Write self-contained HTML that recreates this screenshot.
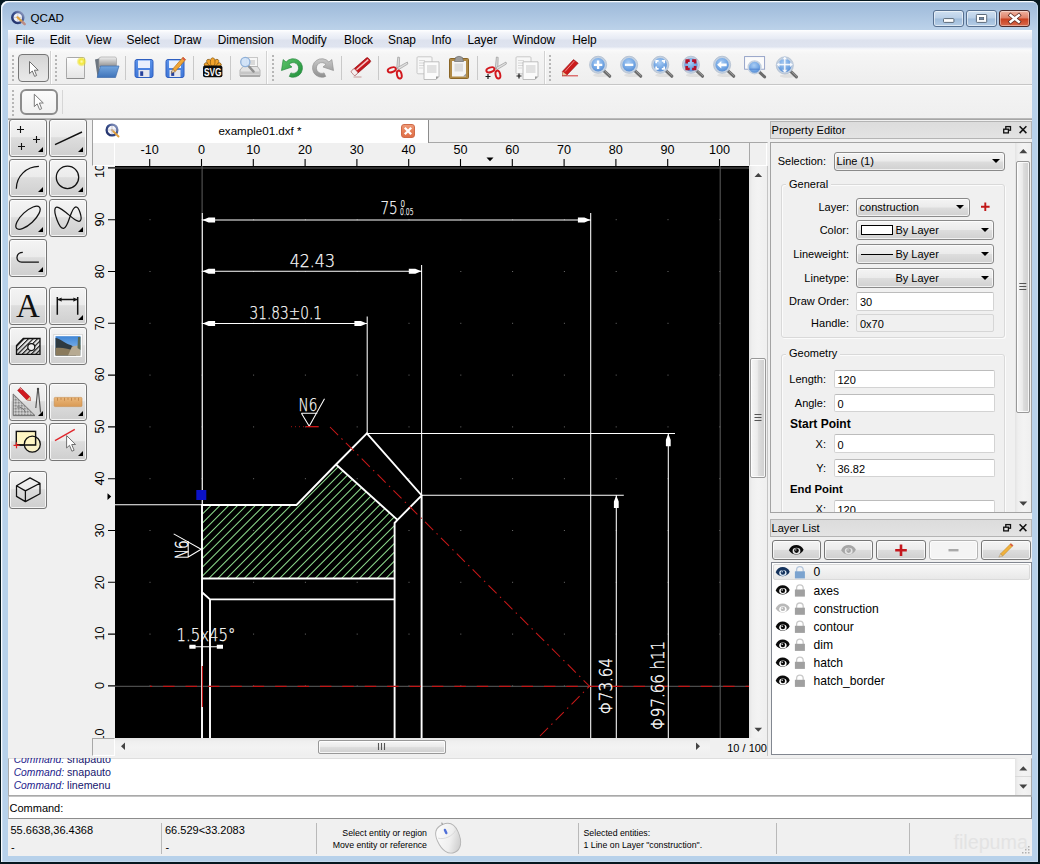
<!DOCTYPE html>
<html lang="en">
<head>
<meta charset="utf-8">
<title>QCAD</title>
<style>
html,body{margin:0;padding:0;}
body{width:1040px;height:864px;position:relative;overflow:hidden;background:#061820;font-family:"Liberation Sans",sans-serif;font-size:12px;color:#000;}
.a{position:absolute;}
.t{position:absolute;white-space:nowrap;line-height:14px;}
/* window frame */
#frame{left:0.7px;top:0.7px;width:1037.8px;height:861.8px;background:#b7d1ea;border-radius:7px 7px 0 0;}
#frameHi{left:0.7px;top:0.7px;width:1037.8px;height:861.8px;border-radius:7px 7px 0 0;box-shadow:inset 1.3px 1.3px 0 #f8fbfe, inset -1px -1px 0 #c6dbef;background:linear-gradient(180deg,#9db9d9 0px,#a9c3e0 12px,#bdd3ea 30px,#b7d1ea 120px,#b7d1ea 100%);}
#client{left:8px;top:30px;width:1024px;height:826px;background:#f0f0f0;}
/* menu */
#menubar{left:8px;top:30px;width:1024px;height:20px;background:linear-gradient(180deg,#ffffff 0,#f3f5fa 3px,#e6eaf4 9px,#dde2ee 10px,#dfe4f0 17px,#eef1f7 18px,#f5f6fa 19px,#f8f9fb 20px);}
.m{position:absolute;top:33px;line-height:14px;font-size:11.9px;white-space:nowrap;width:80px;text-align:center;}
/* toolbars */
.tbsep{position:absolute;width:1px;background:#c9c9c9;}
.grip{position:absolute;width:2px;background:repeating-linear-gradient(180deg,#b6b6b6 0,#b6b6b6 2px,transparent 2px,transparent 4px);}
/* Win7 style button */
.btn{position:absolute;box-sizing:border-box;border:1px solid #767676;border-radius:3px;background:linear-gradient(180deg,#f4f4f4 0,#ebebeb 47%,#dddddd 49%,#cfcfcf 100%);box-shadow:inset 0 0 0 1px rgba(255,255,255,.75);}
.corner{position:absolute;width:0;height:0;border-left:5px solid transparent;border-bottom:5px solid #000;}
.ed{position:absolute;box-sizing:border-box;background:#fff;border:1px solid #d3d3d3;border-top-color:#bcbcbc;border-radius:2px;}
.cb{position:absolute;box-sizing:border-box;border:1px solid #8a8a8a;border-radius:3px;background:linear-gradient(180deg,#f4f4f4 0,#ebebeb 48%,#dddddd 52%,#d0d0d0 100%);box-shadow:inset 0 0 0 1px rgba(255,255,255,.7);}
.dn{position:absolute;width:0;height:0;border-left:4px solid transparent;border-right:4px solid transparent;border-top:4px solid #000;}
.pl{position:absolute;white-space:nowrap;line-height:14px;font-size:11px;text-align:right;}
.pv{position:absolute;white-space:nowrap;line-height:14px;font-size:11px;}
.ll{position:absolute;white-space:nowrap;line-height:14px;font-size:12.1px;left:813.5px;}
.st{position:absolute;white-space:nowrap;line-height:13px;font-size:11px;}
</style>
</head>
<body>
<div class="a" id="frame"></div>
<div class="a" id="frameHi"></div>
<div class="a" id="client"></div>

<!-- TITLE BAR -->
<div class="t" style="left:30.500px;top:9.500px;font-size:11.600px;line-height:16px;">QCAD</div>

<!-- MENU BAR -->
<div class="a" id="menubar"></div>
<span class="m" style="left:-15.00px">File</span>
<span class="m" style="left:20.00px">Edit</span>
<span class="m" style="left:58.50px">View</span>
<span class="m" style="left:103.00px">Select</span>
<span class="m" style="left:147.50px">Draw</span>
<span class="m" style="left:205.75px">Dimension</span>
<span class="m" style="left:269.25px">Modify</span>
<span class="m" style="left:318.50px">Block</span>
<span class="m" style="left:362.00px">Snap</span>
<span class="m" style="left:401.50px">Info</span>
<span class="m" style="left:442.25px">Layer</span>
<span class="m" style="left:494.00px">Window</span>
<span class="m" style="left:544.50px">Help</span>

<!-- caption buttons -->
<div class="a" style="left:933px;top:10.400px;width:30.700px;height:16.200px;box-sizing:border-box;border:1px solid #566f8f;border-radius:3px;background:linear-gradient(180deg,#cfe0f1 0,#b9cfe7 48%,#9fbcdb 52%,#b5cde6 100%);box-shadow:inset 0 0 0 1px rgba(255,255,255,.55)"></div>
<div class="a" style="left:966px;top:10.400px;width:30.500px;height:16.200px;box-sizing:border-box;border:1px solid #566f8f;border-radius:3px;background:linear-gradient(180deg,#cfe0f1 0,#b9cfe7 48%,#9fbcdb 52%,#b5cde6 100%);box-shadow:inset 0 0 0 1px rgba(255,255,255,.55)"></div>
<div class="a" style="left:999px;top:10.400px;width:31px;height:16.200px;box-sizing:border-box;border:1px solid #4a2a2a;border-radius:3px;background:linear-gradient(180deg,#eeb3a1 0,#df7f66 48%,#c8401f 52%,#d8694c 100%);box-shadow:inset 0 0 0 1px rgba(255,255,255,.4)"></div>
<svg class="a" style="left:0;top:0" width="1040" height="40" viewBox="0 0 1040 40">
<rect x="943.500" y="18.600" width="10.400" height="3.800" rx=".8" fill="#fff" stroke="#4d5b6b" stroke-width=".9"/>
<rect x="976.400" y="14.500" width="10.300" height="7.900" rx=".8" fill="#fff" stroke="#4d5b6b" stroke-width=".9"/>
<rect x="979.400" y="17.400" width="4.300" height="2.300" fill="#6f87a4" stroke="#4d5b6b" stroke-width=".7"/>
<path d="M1010.600 15.300 l8.200 6.500 M1018.800 15.300 l-8.200 6.500" stroke="#5a2a22" stroke-width="4" stroke-linecap="square"/>
<path d="M1010.600 15.300 l8.200 6.500 M1018.800 15.300 l-8.200 6.500" stroke="#fff" stroke-width="2.500" stroke-linecap="square"/>
<!-- app icon -->
<defs><linearGradient id="gRing" x1="1" y1="0" x2="0" y2="1"><stop offset="0" stop-color="#9aa6c8"/><stop offset=".45" stop-color="#3b4f8c"/><stop offset="1" stop-color="#1e2e66"/></linearGradient></defs>
<circle cx="17.800" cy="17.400" r="5.500" fill="#eef1f8" stroke="url(#gRing)" stroke-width="2.500"/>
<path d="M14 17.400 h7.600 M17.800 13.600 v7.600" stroke="#b9bdd0" stroke-width=".7"/>
<path d="M17.500 17.300 L24.300 23.800" stroke="#e3a23a" stroke-width="2.200" stroke-linecap="round"/>
<path d="M22.200 21.800 L24.800 24.300" stroke="#b98a8a" stroke-width="2.200" stroke-linecap="round"/>
</svg>
<!-- TOOLBARS -->
<div class="a" style="left:8px;top:50px;width:1024px;height:34px;background:linear-gradient(180deg,#fafafa 0,#f5f5f5 4px,#eeeeee 100%)"></div>
<div class="a" style="left:8px;top:86px;width:1024px;height:32px;background:linear-gradient(180deg,#f4f4f4 0,#efefef 100%)"></div>
<div class="a" style="left:8px;top:84px;width:1024px;height:1px;background:#c6c6c6"></div>
<div class="a" style="left:8px;top:85px;width:1024px;height:1px;background:#fbfbfb"></div>
<div class="a" style="left:8px;top:118px;width:1024px;height:1px;background:#b9b9b9"></div>
<div class="a" style="left:8px;top:119px;width:1024px;height:1px;background:#a6a6a6"></div>
<!-- grips -->
<div class="grip" style="left:12px;top:55px;height:26px"></div>
<div class="grip" style="left:55px;top:55px;height:26px"></div>
<div class="grip" style="left:272px;top:55px;height:26px"></div>
<div class="grip" style="left:549px;top:55px;height:26px"></div>
<div class="grip" style="left:12px;top:90px;height:26px"></div>
<!-- toolbar end separators -->
<div class="tbsep" style="left:50px;top:51px;height:33px;background:#d2d2d2"></div>
<div class="tbsep" style="left:51px;top:51px;height:33px;background:#fdfdfd"></div>
<div class="tbsep" style="left:266px;top:51px;height:33px;background:#d2d2d2"></div>
<div class="tbsep" style="left:267px;top:51px;height:33px;background:#fdfdfd"></div>
<div class="tbsep" style="left:544px;top:51px;height:33px;background:#d2d2d2"></div>
<div class="tbsep" style="left:545px;top:51px;height:33px;background:#fdfdfd"></div>
<!-- item separators -->
<div class="tbsep" style="left:125px;top:56px;height:24px"></div>
<div class="tbsep" style="left:193px;top:56px;height:24px"></div>
<div class="tbsep" style="left:230px;top:56px;height:24px"></div>
<div class="tbsep" style="left:341px;top:56px;height:24px"></div>
<div class="tbsep" style="left:378px;top:56px;height:24px"></div>
<div class="tbsep" style="left:477px;top:56px;height:24px"></div>
<div class="tbsep" style="left:62px;top:90px;height:24px;background:#d6d6d6"></div>
<!-- pressed button tb1 -->
<div class="a" style="left:18px;top:54px;width:31px;height:28px;box-sizing:border-box;border:1.5px solid #767676;border-radius:4px;background:linear-gradient(180deg,#d4d4d4 0,#dedede 40%,#e9e9e9 100%);"></div>
<!-- button tb2 -->
<div class="a" style="left:20px;top:89px;width:38px;height:26px;box-sizing:border-box;border:2px solid #8d8d8d;border-radius:6px;background:linear-gradient(180deg,#fbfbfb 0,#f1f1f1 100%);"></div>
<svg class="a" style="left:0;top:0" width="1040" height="864" viewBox="0 0 1040 864">
<defs>
<linearGradient id="gPaper" x1="0" y1="0" x2="0" y2="1"><stop offset="0" stop-color="#ffffff"/><stop offset="1" stop-color="#e4e4e4"/></linearGradient>
<radialGradient id="gGlow"><stop offset="0" stop-color="#fffbb0"/><stop offset=".45" stop-color="#f3e83a"/><stop offset="1" stop-color="#e6d800" stop-opacity="0"/></radialGradient>
<linearGradient id="gFold" x1="0" y1="0" x2="0" y2="1"><stop offset="0" stop-color="#74a7df"/><stop offset="1" stop-color="#3f73b9"/></linearGradient>
<linearGradient id="gGray" x1="0" y1="0" x2="0" y2="1"><stop offset="0" stop-color="#f0f0f0"/><stop offset="1" stop-color="#8c8c8c"/></linearGradient>
<linearGradient id="gFlop" x1="0" y1="0" x2="0" y2="1"><stop offset="0" stop-color="#5b93ea"/><stop offset="1" stop-color="#3f77d8"/></linearGradient>
<radialGradient id="gLens" cx=".45" cy=".35" r=".7"><stop offset="0" stop-color="#a9cdf5"/><stop offset=".6" stop-color="#6fa3e2"/><stop offset="1" stop-color="#4c82cc"/></radialGradient>
<linearGradient id="gGreen" x1="0" y1="0" x2="1" y2="1"><stop offset="0" stop-color="#5cc46a"/><stop offset="1" stop-color="#1f8f3a"/></linearGradient>
<linearGradient id="gRedo" x1="0" y1="0" x2="0" y2="1"><stop offset="0" stop-color="#c9c9c9"/><stop offset="1" stop-color="#8f8f8f"/></linearGradient>
</defs>
<!-- cursor arrows -->
<path d="M29.5 61.5 L29.5 73.6 L32.3 71 L34.6 76.4 L36.6 75.5 L34.4 70.2 L38.2 70.2 Z" fill="#fff" stroke="#6e6e6e" stroke-width="1" stroke-linejoin="round"/>
<path d="M34.3 94.2 L34.3 106.6 L37.2 103.9 L39.6 109.6 L41.7 108.7 L39.4 103 L43.3 103 Z" fill="#fff" stroke="#7a7a7a" stroke-width="1" stroke-linejoin="round"/>
<!-- new -->
<rect x="66.5" y="57.5" width="18" height="21" rx="1" fill="url(#gPaper)" stroke="#a9a9a9"/>
<path d="M66.5 78.5 H84.5" stroke="#8c8c8c"/>
<circle cx="81.6" cy="61.6" r="5.2" fill="url(#gGlow)"/>
<!-- open -->
<path d="M95 59.5 L99 58.5 L99.5 77 L97.5 77 Z" fill="#6d7680"/>
<path d="M99 58 L101 57 H115.5 L116.5 58.5 V67 H99 Z" fill="url(#gGray)" stroke="#9a9a9a" stroke-width=".6"/>
<path d="M100.5 66 H119 L115.5 77.5 H97.2 Z" fill="url(#gFold)" stroke="#3d6cab" stroke-width=".7"/>
<!-- save -->
<rect x="135" y="59.5" width="18" height="18" rx="2" fill="url(#gFlop)" stroke="#2f5fc0"/>
<rect x="138" y="60.5" width="12" height="7.5" fill="#e9f0fd"/>
<rect x="138.5" y="70" width="11" height="7" fill="#e6e6ee"/>
<rect x="140.2" y="71.3" width="3" height="4.6" fill="#27419c"/>
<!-- save as -->
<rect x="166" y="59.5" width="18" height="18" rx="2" fill="url(#gFlop)" stroke="#2f5fc0"/>
<rect x="169" y="60.5" width="12" height="7.5" fill="#e9f0fd"/>
<rect x="169.5" y="70" width="11" height="7" fill="#e6e6ee"/>
<rect x="171.2" y="71.3" width="3" height="4.6" fill="#27419c"/>
<path d="M183 57.2 L185.6 59.6 L175.2 71.6 L172.6 69.2 Z" fill="#f0a636" stroke="#b86f14" stroke-width=".7"/>
<path d="M172.6 69.2 L175.2 71.6 L171.3 73.2 Z" fill="#f4d9b0" stroke="#7a5a30" stroke-width=".5"/>
<path d="M183 57.2 L185.6 59.6 L184.6 60.8 L182 58.4Z" fill="#d9534a"/>
<!-- svg export -->
<g fill="#f3a42c" stroke="#6a4208" stroke-width=".55">
<ellipse cx="212.700" cy="62" rx="2.300" ry="4.200" transform="rotate(-72 212.700 66.800)"/>
<ellipse cx="212.700" cy="62" rx="2.300" ry="4.200" transform="rotate(72 212.700 66.800)"/>
<ellipse cx="212.700" cy="62" rx="2.300" ry="4.200" transform="rotate(-36 212.700 66.800)"/>
<ellipse cx="212.700" cy="62" rx="2.300" ry="4.200" transform="rotate(36 212.700 66.800)"/>
<ellipse cx="212.700" cy="62" rx="2.300" ry="4.200"/>
</g>
<rect x="203" y="65.600" width="19.400" height="11.600" rx="2" fill="#0c0c0c"/>
<text x="212.700" y="75.600" font-family="Liberation Sans, sans-serif" font-weight="bold" font-size="10.400" fill="#fff" text-anchor="middle" textLength="17.600" lengthAdjust="spacingAndGlyphs">SVG</text>
<!-- print preview -->
<rect x="246.5" y="57.5" width="11" height="11" fill="#f6f6f6" stroke="#b4b4b4" stroke-width=".7"/>
<rect x="249" y="60" width="6" height="5" fill="#d9d9d9"/>
<path d="M240 70 L243 66.5 H257.5 L260 70 V76 H240 Z" fill="#e3e3e3" stroke="#9b9b9b" stroke-width=".7"/>
<rect x="240" y="71.5" width="20" height="3" fill="#c6c6c6"/>
<rect x="240" y="75" width="20" height="2" fill="#a9a9a9"/>
<path d="M248.5 66 L253.6 71.6" stroke="#8f8f8f" stroke-width="2.4" stroke-linecap="round"/>
<circle cx="245.3" cy="62" r="4.6" fill="#cfe2f7" fill-opacity=".92" stroke="#8fb0d8" stroke-width="1.3"/>
<!-- undo -->
<path d="M286.080 62.020 A9.300 9.300 0 1 1 289.270 76.430 L290.920 72.890 A5.400 5.400 0 1 0 289.060 64.530 L292.010 67 L281.460 70.550 L283.130 59.540 Z" fill="url(#gGreen)" stroke="#1d7f35" stroke-width=".6" stroke-linejoin="round"/>
<!-- redo -->
<path transform="translate(615 0) scale(-1 1)" d="M286.080 62.020 A9.300 9.300 0 1 1 289.270 76.430 L290.920 72.890 A5.400 5.400 0 1 0 289.060 64.530 L292.010 67 L281.460 70.550 L283.130 59.540 Z" fill="url(#gRedo)" stroke="#8a8a8a" stroke-width=".6" stroke-linejoin="round"/>
<!-- eraser -->
<path d="M353.500 77 H361.500" stroke="#c9a3a3" stroke-width="1.100"/>
<g transform="rotate(-41 361 66.500)">
<rect x="350" y="63.600" width="22" height="5.800" rx="1.500" fill="#c4161c" stroke="#8f0f12" stroke-width=".6"/>
<rect x="350" y="63.600" width="4.600" height="5.800" rx="1.200" fill="#f6eeee" stroke="#b49a9a" stroke-width=".5"/>
<rect x="355.500" y="65.300" width="15.500" height="1.500" fill="#f6c4c4"/>
</g>
<!-- scissors -->
<g id="sc1">
<path d="M397.8 57 L399.6 57.4 L399.2 69.5 L396.6 68.6 Z" fill="#d8d8d8" stroke="#8f8f8f" stroke-width=".6"/>
<path d="M407.4 62 L407.8 64 L398.6 69.6 L397.4 67.6 Z" fill="#e0e0e0" stroke="#8f8f8f" stroke-width=".6"/>
<ellipse cx="391.8" cy="69.8" rx="4.2" ry="2.3" transform="rotate(-18 391.8 69.8)" fill="none" stroke="#d2181e" stroke-width="1.9"/>
<ellipse cx="399.3" cy="74.6" rx="2.3" ry="4" transform="rotate(-14 399.3 74.6)" fill="none" stroke="#d2181e" stroke-width="1.9"/>
</g>
<!-- copy -->
<rect x="417" y="56.8" width="15" height="17" rx="1" fill="#f7f7f7" stroke="#bdbdbd" stroke-width=".8"/>
<path d="M419 60.5h6M419 63h6M419 65.500h6M419 68h4" stroke="#d0d0d0" stroke-width=".8"/>
<path d="M424 61.800 H439 V76.500 L436 79.500 H424 Z" fill="#fbfbfb" stroke="#b0b0b0" stroke-width=".8"/>
<rect x="427" y="65" width="9.500" height="8" fill="#e1e1e1"/>
<path d="M439 76.500 L436 79.500 V76.500 Z" fill="#9a9a9a"/>
<!-- paste -->
<rect x="449.500" y="58.500" width="19" height="20" rx="1" fill="#b08a46" stroke="#8a6526" stroke-width="1"/>
<rect x="452" y="61" width="14" height="15.500" fill="#f4f4f4"/>
<rect x="454.500" y="63.500" width="8.500" height="8" fill="#dcdcdc"/>
<path d="M466 73.500 L463 76.500 H466 Z" fill="#9a9a9a"/>
<path d="M454.500 61.500 L455.500 57.500 Q459 55 462.500 57.500 L463.500 61.500 Z" fill="#9c9c9c" stroke="#6f6f6f" stroke-width=".7"/>
<!-- cut+ -->
<path d="M496.400 57 L498.200 57.400 L497.800 69.500 L495.200 68.600 Z" fill="#d8d8d8" stroke="#8f8f8f" stroke-width=".6"/>
<path d="M506 62 L506.400 64 L497.200 69.600 L496 67.600 Z" fill="#e0e0e0" stroke="#8f8f8f" stroke-width=".6"/>
<ellipse cx="490.400" cy="69.800" rx="4.200" ry="2.300" transform="rotate(-18 490.400 69.800)" fill="none" stroke="#d2181e" stroke-width="1.900"/>
<ellipse cx="497.900" cy="74.600" rx="2.300" ry="4" transform="rotate(-14 497.900 74.600)" fill="none" stroke="#d2181e" stroke-width="1.900"/>
<path d="M485.500 76.500 h5 M488 74 v5" stroke="#1a1a1a" stroke-width="1.200"/>
<!-- copy+ -->
<rect x="516" y="56.800" width="15" height="17" rx="1" fill="#f7f7f7" stroke="#bdbdbd" stroke-width=".8"/>
<path d="M518 60.500h6M518 63h6M518 65.500h6M518 68h4" stroke="#d0d0d0" stroke-width=".8"/>
<path d="M523 61.800 H538 V76.500 L535 79.500 H523 Z" fill="#fbfbfb" stroke="#b0b0b0" stroke-width=".8"/>
<rect x="526" y="65" width="9.500" height="8" fill="#e1e1e1"/>
<path d="M538 76.500 L535 79.500 V76.500 Z" fill="#9a9a9a"/>
<path d="M516.500 76 h5 M519 73.500 v5" stroke="#1a1a1a" stroke-width="1.200"/>
<!-- red pencil -->
<path d="M562 75.800 H578" stroke="#d64545" stroke-width="1.100"/>
<path d="M573.500 59.600 L578.200 63.200 L567 75 L562.600 75.600 L562.400 71.400 Z" fill="#cc1c1c" stroke="#8f0f12" stroke-width=".6"/>
<path d="M562.400 71.400 L567 75 L562.600 75.600 Z" fill="#e8c9a0"/>
<path d="M574.500 60.800 L565 71.500" stroke="#f08a8a" stroke-width="1"/>
</svg>
<svg class="a" style="left:0;top:0" width="1040" height="864" viewBox="0 0 1040 864">
<!-- zoom in -->
<ellipse cx="601.1" cy="75.3" rx="8" ry="1.8" fill="#000" fill-opacity=".07"/>
<path d="M603.7 70.6 L609.7 76.2" stroke="#6c6c6c" stroke-width="3.2" stroke-linecap="round"/>
<path d="M605.3 71.4 L609.9 75.7" stroke="#9a9a9a" stroke-width="1" stroke-linecap="round"/>
<circle cx="598.1" cy="64.8" r="7.6" fill="url(#gLens)" stroke="#c3d0e0" stroke-width="1.8"/>
<circle cx="598.1" cy="64.8" r="8.6" fill="none" stroke="#9fb0c6" stroke-width=".6"/>
<path d="M593.9 64.8 h8.4 M598.1 60.6 v8.4" stroke="#fff" stroke-width="2.3"/>
<!-- zoom out -->
<ellipse cx="632.1" cy="75.3" rx="8" ry="1.8" fill="#000" fill-opacity=".07"/>
<path d="M634.7 70.6 L640.7 76.2" stroke="#6c6c6c" stroke-width="3.2" stroke-linecap="round"/>
<path d="M636.3 71.4 L640.9 75.7" stroke="#9a9a9a" stroke-width="1" stroke-linecap="round"/>
<circle cx="629.1" cy="64.8" r="7.6" fill="url(#gLens)" stroke="#c3d0e0" stroke-width="1.8"/>
<circle cx="629.1" cy="64.8" r="8.6" fill="none" stroke="#9fb0c6" stroke-width=".6"/>
<path d="M624.9 64.8 h8.4" stroke="#fff" stroke-width="2.3"/>
<!-- zoom auto -->
<ellipse cx="663.2" cy="75.3" rx="8" ry="1.8" fill="#000" fill-opacity=".07"/>
<path d="M665.8 70.6 L671.8 76.2" stroke="#6c6c6c" stroke-width="3.2" stroke-linecap="round"/>
<path d="M667.4 71.4 L672.0 75.7" stroke="#9a9a9a" stroke-width="1" stroke-linecap="round"/>
<circle cx="660.2" cy="64.8" r="7.6" fill="url(#gLens)" stroke="#c3d0e0" stroke-width="1.8"/>
<circle cx="660.2" cy="64.8" r="8.6" fill="none" stroke="#9fb0c6" stroke-width=".6"/>
<path d="M656.2 63.2 v-2.4 h2.4 M661.8 60.8 h2.4 v2.4 M664.2 66.4 v2.4 h-2.4 M658.6 68.8 h-2.4 v-2.4" fill="none" stroke="#fff" stroke-width="1.7"/>
<!-- zoom selection -->
<ellipse cx="693.9" cy="75.3" rx="8" ry="1.8" fill="#000" fill-opacity=".07"/>
<path d="M696.5 70.6 L702.5 76.2" stroke="#6c6c6c" stroke-width="3.2" stroke-linecap="round"/>
<path d="M698.1 71.4 L702.7 75.7" stroke="#9a9a9a" stroke-width="1" stroke-linecap="round"/>
<circle cx="690.9" cy="64.8" r="7.6" fill="url(#gLens)" stroke="#c3d0e0" stroke-width="1.8"/>
<circle cx="690.9" cy="64.8" r="8.6" fill="none" stroke="#9fb0c6" stroke-width=".6"/>
<path d="M686.7 63.6 v-3 h3 M692.1 60.6 h3 v3 M695.1 66.0 v3 h-3 M689.7 69.0 h-3 v-3" fill="none" stroke="#b3122a" stroke-width="2.6"/>
<!-- zoom previous -->
<ellipse cx="725.1" cy="75.3" rx="8" ry="1.8" fill="#000" fill-opacity=".07"/>
<path d="M727.7 70.6 L733.7 76.2" stroke="#6c6c6c" stroke-width="3.2" stroke-linecap="round"/>
<path d="M729.3 71.4 L733.9 75.7" stroke="#9a9a9a" stroke-width="1" stroke-linecap="round"/>
<circle cx="722.1" cy="64.8" r="7.6" fill="url(#gLens)" stroke="#c3d0e0" stroke-width="1.8"/>
<circle cx="722.1" cy="64.8" r="8.6" fill="none" stroke="#9fb0c6" stroke-width=".6"/>
<path d="M717.1 64.8 L721.3 61.0 V63.4 H726.7 V66.2 H721.3 V68.6 Z" fill="#fff"/>
<!-- zoom window -->
<rect x="744.6" y="56.6" width="20" height="12.6" fill="#fbfbfb" stroke="#8d9cc4" stroke-width=".9"/>
<path d="M759.2 71.9 L764.6 76.9" stroke="#6c6c6c" stroke-width="3" stroke-linecap="round"/>
<circle cx="754.6" cy="67.3" r="6.3" fill="url(#gLens)" stroke="#c3d0e0" stroke-width="1.6"/>
<path d="M749.2 69.2 h10.8" stroke="#4f82cf" stroke-width=".9"/>
<!-- pan zoom -->
<ellipse cx="787.8" cy="75.9" rx="8" ry="1.8" fill="#000" fill-opacity=".07"/>
<path d="M790.4 71.2 L796.4 76.8" stroke="#6c6c6c" stroke-width="3.2" stroke-linecap="round"/>
<path d="M792.0 72.0 L796.6 76.3" stroke="#9a9a9a" stroke-width="1" stroke-linecap="round"/>
<circle cx="784.8" cy="65.4" r="7.6" fill="url(#gLens)" stroke="#c3d0e0" stroke-width="1.8"/>
<circle cx="784.8" cy="65.4" r="8.6" fill="none" stroke="#9fb0c6" stroke-width=".6"/>
<path d="M784.8 56.2 l2.6 3.2 h-1.7 v4.3 h4.3 v-1.700 l3.200 2.600 l-3.200 2.600 v-1.700 h-4.300 v4.300 h1.700 l-2.600 3.200 l-2.600 -3.200 h1.700 v-4.300 h-4.300 v1.700 l-3.200 -2.600 l3.200 -2.600 v1.700 h4.300 v-4.300 h-1.700 Z" fill="#fff" fill-opacity=".95" stroke="#9fbbe0" stroke-width=".4"/>
</svg>

<!-- LEFT TOOLS -->
<div class="btn" style="left:9px;top:119.3px;width:38px;height:37.300px"></div>
<div class="corner" style="left:38px;top:147.3px"></div>
<div class="btn" style="left:49px;top:119.3px;width:38px;height:37.300px"></div>
<div class="corner" style="left:78px;top:147.3px"></div>
<div class="btn" style="left:9px;top:159.3px;width:38px;height:37.300px"></div>
<div class="corner" style="left:38px;top:187.3px"></div>
<div class="btn" style="left:49px;top:159.3px;width:38px;height:37.300px"></div>
<div class="corner" style="left:78px;top:187.3px"></div>
<div class="btn" style="left:9px;top:199.3px;width:38px;height:37.300px"></div>
<div class="corner" style="left:38px;top:227.3px"></div>
<div class="btn" style="left:49px;top:199.3px;width:38px;height:37.300px"></div>
<div class="corner" style="left:78px;top:227.3px"></div>
<div class="btn" style="left:9px;top:239.3px;width:38px;height:37.300px"></div>
<div class="corner" style="left:38px;top:267.3px"></div>
<div class="btn" style="left:9px;top:287.3px;width:38px;height:37.300px"></div>
<div class="btn" style="left:49px;top:287.3px;width:38px;height:37.300px"></div>
<div class="corner" style="left:78px;top:315.3px"></div>
<div class="btn" style="left:9px;top:327.3px;width:38px;height:37.300px"></div>
<div class="btn" style="left:49px;top:327.3px;width:38px;height:37.300px"></div>
<div class="btn" style="left:9px;top:383.3px;width:38px;height:37.300px"></div>
<div class="corner" style="left:38px;top:411.3px"></div>
<div class="btn" style="left:49px;top:383.3px;width:38px;height:37.300px"></div>
<div class="corner" style="left:78px;top:411.3px"></div>
<div class="btn" style="left:9px;top:423.3px;width:38px;height:37.300px"></div>
<div class="btn" style="left:49px;top:423.3px;width:38px;height:37.300px"></div>
<div class="corner" style="left:78px;top:451.3px"></div>
<div class="btn" style="left:9px;top:471.3px;width:38px;height:37.300px"></div>
<svg class="a" style="left:0;top:0" width="1040" height="864" viewBox="0 0 1040 864">
<defs>
<linearGradient id="gSky" x1="0" y1="0" x2="0" y2="1"><stop offset="0" stop-color="#3f86d6"/><stop offset="1" stop-color="#9cc6ee"/></linearGradient>
<linearGradient id="gWood" x1="0" y1="0" x2="0" y2="1"><stop offset="0" stop-color="#eab77a"/><stop offset="1" stop-color="#d99a55"/></linearGradient>
<pattern id="pHatchI" width="3.2" height="3.2" patternUnits="userSpaceOnUse" patternTransform="rotate(-45)"><rect x="0" y="0" width="3.2" height="1.1" fill="#111"/></pattern>
<pattern id="pTri" width="3" height="3" patternUnits="userSpaceOnUse"><rect width="3" height="3" fill="#b5b5b5"/><rect width="1.5" height="1.5" fill="#8c8c8c"/><rect x="1.5" y="1.5" width="1.500" height="1.500" fill="#d2d2d2"/></pattern>
</defs>
<g fill="none" stroke="#111" stroke-width="1.25">
<!-- points -->
<path d="M17 129.500h7M20.500 126v7 M33 139.500h7M36.500 136v7 M18 146.500h7M21.500 143v7" stroke-width="1.1"/>
<!-- line -->
<path d="M55 144.600 L82 132" stroke-width="1.4"/>
<!-- arc -->
<path d="M16.300 188.700 A22.600 22.600 0 0 1 38.900 166.300"/>
<!-- circle -->
<circle cx="67.500" cy="177.300" r="11.200"/>
<!-- ellipse -->
<ellipse cx="28" cy="217.700" rx="15.600" ry="6.200" transform="rotate(-43 28 217.700)"/>
<!-- spline -->
<path d="M55.200 208.300 C53.500 212 59 229 63.600 228.400 C69 227.600 70.500 207 75.900 206.800 C79 206.800 82.500 218 80.400 220.600 C78 223.500 71 216.500 66 212.500 C61 208.500 56.500 205.500 55.200 208.300 Z"/>
<!-- polyline -->
<path d="M22.800 252.300 C15.500 252.500 15 262.100 21.700 262.100 L38.900 262.100"/>
<!-- dimension -->
<path d="M57.300 297 V314.800 M77.700 297 V314.800 M57.300 299.600 H77.700" stroke-width="1.5"/>
<path d="M57.800 299.600 l3.800 -2.100 v4.200 Z M77.200 299.600 l-3.800 -2.100 v4.200 Z" fill="#111" stroke="none"/>
<!-- cube -->
<path d="M30 477.900 L40 483.300 V493.700 L25.400 501.600 L16.500 496.400 V485.700 Z M16.500 485.700 L25.400 490.900 L40 483.300 M25.400 490.900 V501.600" stroke-linejoin="round"/>
</g>
<!-- hatch icon -->
<path d="M16.500 354.400 V345.500 L23.300 338.500 H40 V354.400 Z" fill="url(#pHatchI)" stroke="#111" stroke-width="1.3"/>
<circle cx="31.300" cy="347.100" r="3.500" fill="#eee" stroke="#111" stroke-width="1.2"/>
<!-- image icon -->
<rect x="53.800" y="334.400" width="28.600" height="23" fill="#fdfdfd" stroke="#c9c9c9" stroke-width=".6"/>
<rect x="55.500" y="336.200" width="25" height="19.200" fill="url(#gSky)"/>
<path d="M55.500 338 C60 338.500 64 342.500 69 344.500 C72 345.600 74 346.500 76 349 L76 355.400 H55.500 Z" fill="#2f3a40"/>
<path d="M55.500 348 C62 347 68 349 76 351 L80.500 355.400 H55.500 Z" fill="#8a7a5c"/>
<path d="M72 346.500 L80.500 345 V355.400 H68 Z" fill="#b7aa92"/>
<path d="M78 337 L80.500 337 V350 L77.500 348 Z" fill="#5b6a55"/>
<!-- modify icon -->
<path d="M13.200 394 V415.600 H35 Z" fill="url(#pTri)" stroke="#6f6f6f" stroke-width="1"/>
<path d="M17 407 A8 8 0 0 1 25.500 412.500" fill="none" stroke="#777" stroke-width="1"/>
<path d="M20.400 387.400 L30 396.800 L30.600 400.600 L26.800 400 L17.600 390.400 Z" fill="#d0191e" stroke="#8c0d10" stroke-width=".5"/>
<path d="M30 396.800 L30.600 400.600 L26.800 400 Z" fill="#e3c08a"/>
<path d="M19.600 388.200 L21.800 389.800" stroke="#f7b0b0" stroke-width="1"/>
<path d="M37.800 388.500 L35.800 408 M38.200 388.500 L40.600 412.500" stroke="#555" stroke-width="1.200" fill="none"/>
<circle cx="38" cy="389" r="1.200" fill="#444"/>
<!-- ruler icon -->
<rect x="54.200" y="397.400" width="27.800" height="9.200" rx="1" fill="url(#gWood)" stroke="#c98d4c" stroke-width=".6"/>
<path d="M57.500 397.800v3M61 397.800v2M64.500 397.800v3M68 397.800v2M71.500 397.800v3M75 397.800v2M78.500 397.800v3" stroke="#b87a3d" stroke-width=".7"/>
<!-- block icon -->
<rect x="16.300" y="431.400" width="19.300" height="13.600" fill="#fff6c4" stroke="#111" stroke-width="1.400"/>
<circle cx="32.300" cy="444.200" r="8" fill="#fff6c4" fill-opacity=".85" stroke="#111" stroke-width="1.300"/>
<path d="M16.300 445 H35.600 V436.600" fill="none" stroke="#111" stroke-width="1.400"/>
<path d="M13.500 445.300 h6 M16.500 442.300 v6" stroke="#e02020" stroke-width="1.200"/>
<!-- select icon -->
<path d="M55 440.600 L74.800 429.300" stroke="#e0262c" stroke-width="1.400"/>
<path d="M66.600 435.600 L66.600 448 L69.500 445.300 L71.900 451.200 L74.100 450.300 L71.700 444.500 L75.600 444.500 Z" fill="#fff" stroke="#707070" stroke-width="1" stroke-linejoin="round"/>
<!-- A icon -->
<text x="28" y="316.900" font-family="Liberation Serif, serif" font-size="33" text-anchor="middle" fill="#111">A</text>
</svg>

<!-- CANVAS AREA -->
<div class="a" style="left:92px;top:120px;width:337px;height:23px;background:#fff;border-left:1px solid #a0a0a0;border-right:1px solid #8c8c8c;box-sizing:border-box"></div>
<div class="a" style="left:429px;top:142px;width:339px;height:1px;background:#a8a8a8"></div>
<div class="a" style="left:767px;top:142px;width:1px;height:614px;background:#c4c4c4"></div>
<div class="t" style="left:160px;width:200px;text-align:center;top:124px;font-size:11.6px">example01.dxf *</div>
<div class="a" style="left:401px;top:124px;width:14px;height:14px;box-sizing:border-box;border:1px solid #cf6a48;border-radius:3px;background:linear-gradient(180deg,#ee9a78 0,#e67f58 50%,#e0704a 100%)"></div>
<div class="a" style="left:92px;top:143px;width:676px;height:23px;background:#f0f0f0"></div>
<div class="a" style="left:92px;top:143px;width:23px;height:23px;box-sizing:border-box;border:1px solid #a0a0a0;border-right-color:#fff;border-bottom-color:#fff;border-top:none"></div>
<div class="a" style="left:749px;top:143px;width:18px;height:23px;box-sizing:border-box;border:1px solid #a8a8a8;border-right-color:#fff;border-bottom-color:#fff;border-top:none"></div>
<div class="a" style="left:92px;top:738px;width:23px;height:18px;box-sizing:border-box;border:1px solid #a8a8a8;border-right-color:#fff;border-bottom-color:#fff;"></div>
<div class="a" style="left:115px;top:166px;width:634px;height:572px;background:#000"></div>
<div class="t" style="left:129.6px;width:40px;text-align:center;top:143.100px;font-size:12.600px;line-height:15px">-10</div>
<div class="t" style="left:181.4px;width:40px;text-align:center;top:143.100px;font-size:12.600px;line-height:15px">0</div>
<div class="t" style="left:233.2px;width:40px;text-align:center;top:143.100px;font-size:12.600px;line-height:15px">10</div>
<div class="t" style="left:285.0px;width:40px;text-align:center;top:143.100px;font-size:12.600px;line-height:15px">20</div>
<div class="t" style="left:336.8px;width:40px;text-align:center;top:143.100px;font-size:12.600px;line-height:15px">30</div>
<div class="t" style="left:388.6px;width:40px;text-align:center;top:143.100px;font-size:12.600px;line-height:15px">40</div>
<div class="t" style="left:440.4px;width:40px;text-align:center;top:143.100px;font-size:12.600px;line-height:15px">50</div>
<div class="t" style="left:492.2px;width:40px;text-align:center;top:143.100px;font-size:12.600px;line-height:15px">60</div>
<div class="t" style="left:544.0px;width:40px;text-align:center;top:143.100px;font-size:12.600px;line-height:15px">70</div>
<div class="t" style="left:595.8px;width:40px;text-align:center;top:143.100px;font-size:12.600px;line-height:15px">80</div>
<div class="t" style="left:647.6px;width:40px;text-align:center;top:143.100px;font-size:12.600px;line-height:15px">90</div>
<div class="t" style="left:699.4px;width:40px;text-align:center;top:143.100px;font-size:12.600px;line-height:15px">100</div>
<div class="t" style="left:79.8px;width:40px;text-align:center;top:678.1px;font-size:12.600px;line-height:15px;transform:rotate(-90deg)">0</div>
<div class="t" style="left:79.8px;width:40px;text-align:center;top:626.3px;font-size:12.600px;line-height:15px;transform:rotate(-90deg)">10</div>
<div class="t" style="left:79.8px;width:40px;text-align:center;top:574.5px;font-size:12.600px;line-height:15px;transform:rotate(-90deg)">20</div>
<div class="t" style="left:79.8px;width:40px;text-align:center;top:522.7px;font-size:12.600px;line-height:15px;transform:rotate(-90deg)">30</div>
<div class="t" style="left:79.8px;width:40px;text-align:center;top:470.9px;font-size:12.600px;line-height:15px;transform:rotate(-90deg)">40</div>
<div class="t" style="left:79.8px;width:40px;text-align:center;top:419.1px;font-size:12.600px;line-height:15px;transform:rotate(-90deg)">50</div>
<div class="t" style="left:79.8px;width:40px;text-align:center;top:367.3px;font-size:12.600px;line-height:15px;transform:rotate(-90deg)">60</div>
<div class="t" style="left:79.8px;width:40px;text-align:center;top:315.5px;font-size:12.600px;line-height:15px;transform:rotate(-90deg)">70</div>
<div class="t" style="left:79.8px;width:40px;text-align:center;top:263.7px;font-size:12.600px;line-height:15px;transform:rotate(-90deg)">80</div>
<div class="t" style="left:79.8px;width:40px;text-align:center;top:211.9px;font-size:12.600px;line-height:15px;transform:rotate(-90deg)">90</div>
<div class="a" style="left:92px;top:166px;width:23px;height:40px;overflow:hidden"><div class="t" style="left:-12.2px;width:40px;text-align:center;top:-5.9px;font-size:12.600px;line-height:15px;transform:rotate(-90deg)">100</div></div>
<svg class="a" style="left:0;top:0" width="1040" height="864" viewBox="0 0 1040 864">
<path d="M149.7 159 V166.500 M201.5 159 V166.500 M253.3 159 V166.500 M305.1 159 V166.500 M356.9 159 V166.500 M408.7 159 V166.500 M460.5 159 V166.500 M512.3 159 V166.500 M564.1 159 V166.500 M615.9 159 V166.500 M667.7 159 V166.500 M719.5 159 V166.500 M108 685.9 H115.500 M108 634.1 H115.500 M108 582.3 H115.500 M108 530.5 H115.500 M108 478.7 H115.500 M108 426.9 H115.500 M108 375.1 H115.500 M108 323.3 H115.500 M108 271.5 H115.500 M108 219.7 H115.500 M108 167.9 H115.500 " stroke="#000" stroke-width="1.1" fill="none"/>
<path d="M486.500 157.500 h7 l-3.500 3.700 Z" fill="#000"/>
<path d="M107.500 493.300 v6.600 l3.700 -3.300 Z" fill="#000"/>
<circle cx="112" cy="130" r="5.400" fill="#f4f4f8" stroke="url(#gRing)" stroke-width="2.300"/><path d="M112 130 L118.500 136.500" stroke="#e0a040" stroke-width="2" stroke-linecap="round"/><path d="M108 130 h8 M112 126 v8" stroke="#b8b8c8" stroke-width=".7"/>
<path d="M404.800 127.800 l6.400 6.400 M411.200 127.800 l-6.400 6.400" stroke="#fff" stroke-width="2.300" stroke-linecap="butt"/>
</svg>
<svg class="a" style="left:115px;top:166px" width="634" height="572" viewBox="115 166 634 572">
<defs><clipPath id="hc"><path d="M202 505 H296.500 L336 464.500 L397.500 519.900 L394.600 523 V578.500 H202 Z"/></clipPath></defs>
<path d="M149.5 685.9h1M149.5 634.1h1M149.5 582.3h1M149.5 530.5h1M149.5 478.7h1M149.5 426.9h1M149.5 375.1h1M149.5 323.3h1M149.5 271.5h1M149.5 219.7h1M201.3 685.9h1M201.3 634.1h1M201.3 582.3h1M201.3 530.5h1M201.3 478.7h1M201.3 426.9h1M201.3 375.1h1M201.3 323.3h1M201.3 271.5h1M201.3 219.7h1M253.1 685.9h1M253.1 634.1h1M253.1 582.3h1M253.1 530.5h1M253.1 478.7h1M253.1 426.9h1M253.1 375.1h1M253.1 323.3h1M253.1 271.5h1M253.1 219.7h1M304.9 685.9h1M304.9 634.1h1M304.9 582.3h1M304.9 530.5h1M304.9 478.7h1M304.9 426.9h1M304.9 375.1h1M304.9 323.3h1M304.9 271.5h1M304.9 219.7h1M356.7 685.9h1M356.7 634.1h1M356.7 582.3h1M356.7 530.5h1M356.7 478.7h1M356.7 426.9h1M356.7 375.1h1M356.7 323.3h1M356.7 271.5h1M356.7 219.7h1M408.5 685.9h1M408.5 634.1h1M408.5 582.3h1M408.5 530.5h1M408.5 478.7h1M408.5 426.9h1M408.5 375.1h1M408.5 323.3h1M408.5 271.5h1M408.5 219.7h1M460.3 685.9h1M460.3 634.1h1M460.3 582.3h1M460.3 530.5h1M460.3 478.7h1M460.3 426.9h1M460.3 375.1h1M460.3 323.3h1M460.3 271.5h1M460.3 219.7h1M512.1 685.9h1M512.1 634.1h1M512.1 582.3h1M512.1 530.5h1M512.1 478.7h1M512.1 426.9h1M512.1 375.1h1M512.1 323.3h1M512.1 271.5h1M512.1 219.7h1M563.9 685.9h1M563.9 634.1h1M563.9 582.3h1M563.9 530.5h1M563.9 478.7h1M563.9 426.9h1M563.9 375.1h1M563.9 323.3h1M563.9 271.5h1M563.9 219.7h1M615.7 685.9h1M615.7 634.1h1M615.7 582.3h1M615.7 530.5h1M615.7 478.7h1M615.7 426.9h1M615.7 375.1h1M615.7 323.3h1M615.7 271.5h1M615.7 219.7h1M667.5 685.9h1M667.5 634.1h1M667.5 582.3h1M667.5 530.5h1M667.5 478.7h1M667.5 426.9h1M667.5 375.1h1M667.5 323.3h1M667.5 271.5h1M667.5 219.7h1M719.3 685.9h1M719.3 634.1h1M719.3 582.3h1M719.3 530.5h1M719.3 478.7h1M719.3 426.9h1M719.3 375.1h1M719.3 323.3h1M719.3 271.5h1M719.3 219.7h1" stroke="#6e6e6e" stroke-width="1"/>
<path d="M115 168 H749 M115 686.3 H749 M202.1 166 V738 M720.2 166 V738" stroke="#5e5e5e" stroke-width="1" fill="none"/>
<path d="M72.2 600 L272.2 400 M81.1 600 L281.1 400 M90.0 600 L290.0 400 M98.8 600 L298.8 400 M107.7 600 L307.7 400 M116.5 600 L316.5 400 M125.4 600 L325.4 400 M134.2 600 L334.2 400 M143.1 600 L343.1 400 M151.9 600 L351.9 400 M160.8 600 L360.8 400 M169.6 600 L369.6 400 M178.5 600 L378.5 400 M187.3 600 L387.3 400 M196.2 600 L396.2 400 M205.0 600 L405.0 400 M213.9 600 L413.9 400 M222.7 600 L422.7 400 M231.6 600 L431.6 400 M240.4 600 L440.4 400 M249.3 600 L449.3 400 M258.1 600 L458.1 400 M267.0 600 L467.0 400 M275.8 600 L475.8 400 M284.7 600 L484.7 400 M293.5 600 L493.5 400 M302.4 600 L502.4 400 M311.2 600 L511.2 400 M320.1 600 L520.1 400 M328.9 600 L528.9 400 M337.8 600 L537.8 400 M346.6 600 L546.6 400 M355.5 600 L555.5 400 M364.3 600 L564.3 400 M373.2 600 L573.2 400 M382.0 600 L582.0 400 " stroke="#8ad68a" stroke-width="1.050" fill="none" clip-path="url(#hc)"/>
<path d="M202.300 213 V505 M590.700 213 V738 M202 220 H590.700 M202 271.300 H421.600 M421.600 265 V495 M202 323.400 H367.200 M367.200 316.500 V433.400 M367 433.500 H675 M421.600 495.300 H623.800 M668.300 433.500 V738 M616.300 495.300 V738 M115 504.800 H202 M189.400 646.700 H223 M301.400 413.200 H317.300 M301.400 413.200 L309.200 426.200 L324.500 398.700 M188.200 557 V541.100 M188.200 557 L201.200 549.200 L173.700 533.900" stroke="#fff" stroke-width="1.05" fill="none"/>
<path d="M202.6 220.0 L208.6 217.5 H215.1 V222.5 H208.6 Z M590.4 220.0 L584.4 217.5 H577.9 V222.5 H584.4 Z M202.6 271.3 L208.6 268.8 H215.1 V273.8 H208.6 Z M421.3 271.3 L415.3 268.8 H408.8 V273.8 H415.3 Z M202.6 323.4 L208.6 320.9 H215.1 V325.9 H208.6 Z M366.9 323.4 L360.9 320.9 H354.4 V325.9 H360.9 Z M668.3 433.8 L665.9 439.8 V446.3 H670.7 V439.8 Z M616.3 495.6 L613.9 501.6 V508.1 H618.7 V501.6 Z" fill="#fff"/>
<path d="M189.400 644.700 h6.200 v4 h-6.200 Z M216.800 644.700 h6.200 v4 h-6.200 Z" fill="#fff"/>
<path d="M202 738 V505 H296.500 L336 464.500 L366.900 433.400 L421.700 495.400 L397.500 519.900 L394.600 523 V738 M336 464.500 L397.500 519.900 M202 578.500 H394.600 M202 592.300 L210 599.400 H394.600 M210 599.400 V738 M421.600 495.400 V738" stroke="#fff" stroke-width="1.900" fill="none" stroke-linejoin="miter"/>
<path d="M150 686.300 H749" stroke="#c01616" stroke-width="1.150" stroke-dasharray="11.5 10.9" stroke-dashoffset="9.3" fill="none"/>
<path d="M330 427 L589.500 686.200 L540 736" stroke="#c81818" stroke-width="1.050" stroke-dasharray="11.5 4.7 1.5 4.7" fill="none"/>
<path d="M202.400 666 V707" stroke="#c01414" stroke-width="1.200"/>
<path d="M305.800 426.700 H318.700" stroke="#e01818" stroke-width="1.200"/><path d="M291 426.700 H305" stroke="#a01010" stroke-width="1" stroke-dasharray="1 3"/>
<rect x="196.300" y="490" width="10" height="10" fill="#0b12c8"/>
<text x="380.4" y="214.2" font-family="DejaVu Sans Light, DejaVu Sans, Liberation Sans, sans-serif" font-weight="200" fill="#fff" stroke="#fff" stroke-width=".25" font-size="17.6" textLength="17.3" lengthAdjust="spacingAndGlyphs">75</text>
<text x="400.5" y="207.2" font-family="DejaVu Sans Light, DejaVu Sans, Liberation Sans, sans-serif" font-weight="200" fill="#fff" stroke="#fff" stroke-width=".25" font-size="9.5" textLength="4.6" lengthAdjust="spacingAndGlyphs" style="font-weight:400">0</text>
<text x="400" y="214.6" font-family="DejaVu Sans Light, DejaVu Sans, Liberation Sans, sans-serif" font-weight="200" fill="#fff" stroke="#fff" stroke-width=".25" font-size="9.5" textLength="13.6" lengthAdjust="spacingAndGlyphs" style="font-weight:400">0.05</text>
<text x="289.7" y="266.6" font-family="DejaVu Sans Light, DejaVu Sans, Liberation Sans, sans-serif" font-weight="200" fill="#fff" stroke="#fff" stroke-width=".25" font-size="17.6" textLength="45.3" lengthAdjust="spacingAndGlyphs">42.43</text>
<text x="249.5" y="318.8" font-family="DejaVu Sans Light, DejaVu Sans, Liberation Sans, sans-serif" font-weight="200" fill="#fff" stroke="#fff" stroke-width=".25" font-size="17.6" textLength="72.5" lengthAdjust="spacingAndGlyphs">31.83±0.1</text>
<text x="298.5" y="411.2" font-family="DejaVu Sans Light, DejaVu Sans, Liberation Sans, sans-serif" font-weight="200" fill="#fff" stroke="#fff" stroke-width=".25" font-size="17.6" textLength="18.8" lengthAdjust="spacingAndGlyphs">N6</text>
<text x="176.5" y="641.3" font-family="DejaVu Sans Light, DejaVu Sans, Liberation Sans, sans-serif" font-weight="200" fill="#fff" stroke="#fff" stroke-width=".25" font-size="17.6" textLength="59" lengthAdjust="spacingAndGlyphs">1.5x45°</text>
<g transform="translate(187.700 559.200) rotate(-90)" stroke-width=".45"><text x="0" y="0" font-family="DejaVu Sans Light, DejaVu Sans, Liberation Sans, sans-serif" font-weight="200" fill="#fff" stroke="#fff" font-size="17.6" textLength="18.8" lengthAdjust="spacingAndGlyphs">N6</text></g>
<g transform="translate(612 714.200) rotate(-90)" stroke-width=".4"><text x="0" y="0" font-family="DejaVu Sans Light, DejaVu Sans, Liberation Sans, sans-serif" font-weight="200" fill="#fff" stroke="#fff" font-size="17.6" textLength="56.3" lengthAdjust="spacingAndGlyphs">Φ73.64</text></g>
<g transform="translate(664.300 730) rotate(-90)" stroke-width=".4"><text x="0" y="0" font-family="DejaVu Sans Light, DejaVu Sans, Liberation Sans, sans-serif" font-weight="200" fill="#fff" stroke="#fff" font-size="17.6" textLength="89" lengthAdjust="spacingAndGlyphs">Φ97.66 h11</text></g>
</svg>
<!-- canvas scrollbars -->
<div class="a" style="left:749px;top:166px;width:18px;height:572px;background:linear-gradient(90deg,#e3e3e3 0,#efefef 3px,#f3f3f3 9px,#efefef 100%)"></div>
<div class="a" style="left:115px;top:738px;width:595px;height:18px;background:linear-gradient(180deg,#e3e3e3 0,#efefef 3px,#f3f3f3 9px,#efefef 100%)"></div>
<div class="a" style="left:750px;top:357.500px;width:15.500px;height:120px;box-sizing:border-box;border:1px solid #989898;border-radius:2px;background:linear-gradient(90deg,#f6f6f6 0,#ebebeb 45%,#dcdcdc 55%,#cfcfcf 100%);box-shadow:inset 0 0 0 1px rgba(255,255,255,.8)"></div>
<div class="a" style="left:317.500px;top:739.500px;width:128px;height:14.500px;box-sizing:border-box;border:1px solid #989898;border-radius:2px;background:linear-gradient(180deg,#f6f6f6 0,#ebebeb 45%,#dcdcdc 55%,#cfcfcf 100%);box-shadow:inset 0 0 0 1px rgba(255,255,255,.8)"></div>
<svg class="a" style="left:0;top:0" width="1040" height="864" viewBox="0 0 1040 864">
<path d="M754.500 177 l3.800 -4 l3.800 4 Z M754.500 727.800 l3.800 4 l3.800 -4 Z M125 742.500 l-4 3.700 l4 3.700 Z M696 742.500 l4 3.700 l-4 3.700 Z" fill="#444"/>
<path d="M754.500 414.500 h7 M754.500 417.500 h7 M754.500 420.500 h7" stroke="#555" stroke-width="1.100"/>
<path d="M378.500 743 v7 M381.500 743 v7 M384.500 743 v7" stroke="#555" stroke-width="1.100"/>
</svg>
<div class="t" style="left:715px;width:52px;text-align:right;top:740.500px;font-size:11px">10 / 100</div>
<div class="a" style="left:92px;top:700px;width:23px;height:38px;overflow:hidden"><div class="t" style="left:-12.200px;width:40px;text-align:center;top:30.200px;font-size:12.600px;line-height:15px;transform:rotate(-90deg)">-10</div></div>

<!-- PROPERTY EDITOR -->
<div class="a" style="left:770px;top:121px;width:262px;height:18px;box-sizing:border-box;border:1px solid #b4b4b4;background:linear-gradient(180deg,#dcdcdc 0,#e3e3e3 100%)"></div>
<div class="t" style="left:771.500px;top:123px;font-size:11.100px">Property Editor</div>
<div class="a" style="left:770px;top:142px;width:262px;height:371px;box-sizing:border-box;border:1px solid #a3a3a3;background:#f0f0f0"></div>
<!-- scroll bar -->
<div class="a" style="left:1015px;top:143px;width:16px;height:369px;background:linear-gradient(90deg,#e3e3e3 0,#efefef 3px,#f3f3f3 9px,#efefef 100%)"></div>
<div class="a" style="left:1015.500px;top:160.500px;width:14.500px;height:252px;box-sizing:border-box;border:1px solid #989898;border-radius:2px;background:linear-gradient(90deg,#f6f6f6 0,#ebebeb 45%,#dcdcdc 55%,#cfcfcf 100%);box-shadow:inset 0 0 0 1px rgba(255,255,255,.8)"></div>
<!-- selection -->
<div class="pl" style="left:771px;width:55px;top:154px">Selection:</div>
<div class="cb" style="left:834px;top:152px;width:171px;height:18.500px"></div>
<div class="pv" style="left:836.600px;top:154px">Line (1)</div>
<div class="dn" style="left:991.500px;top:159px"></div>
<!-- group General -->
<div class="a" style="left:781px;top:184px;width:224px;height:154px;box-sizing:border-box;border:1px solid #d9d9d9;border-radius:3px;box-shadow:inset 1px 1px 0 #fbfbfb,1px 1px 0 #fbfbfb"></div>
<div class="pv" style="left:786px;top:177px;background:#f0f0f0;padding:0 3px">General</div>
<div class="pl" style="left:779px;width:70px;top:200px">Layer:</div>
<div class="pl" style="left:779px;width:70px;top:223px">Color:</div>
<div class="pl" style="left:779px;width:70px;top:247px">Lineweight:</div>
<div class="pl" style="left:779px;width:70px;top:271px">Linetype:</div>
<div class="pl" style="left:779px;width:70px;top:294px">Draw Order:</div>
<div class="pl" style="left:779px;width:70px;top:316px">Handle:</div>
<div class="cb" style="left:856.300px;top:197.500px;width:113.500px;height:19px"></div>
<div class="pv" style="left:859.600px;top:200px">construction</div>
<div class="dn" style="left:956px;top:205px"></div>
<div class="cb" style="left:856.300px;top:219.700px;width:138.200px;height:20.600px"></div>
<div class="a" style="left:860.800px;top:225px;width:32.500px;height:9.800px;box-sizing:border-box;border:1px solid #000;background:#fff"></div>
<div class="pv" style="left:895.400px;top:223px">By Layer</div>
<div class="dn" style="left:981px;top:228px"></div>
<div class="cb" style="left:856.300px;top:243.500px;width:138.200px;height:20.600px"></div>
<div class="a" style="left:861px;top:253.700px;width:32px;height:1px;background:#000"></div>
<div class="pv" style="left:895.400px;top:247px">By Layer</div>
<div class="dn" style="left:981px;top:252px"></div>
<div class="cb" style="left:856.300px;top:267.500px;width:138.200px;height:20.600px"></div>
<div class="pv" style="left:895.400px;top:271px">By Layer</div>
<div class="dn" style="left:981px;top:276px"></div>
<div class="ed" style="left:856.300px;top:291.600px;width:138.200px;height:19.200px"></div>
<div class="pv" style="left:860px;top:294.500px">30</div>
<div class="ed" style="left:856.300px;top:314px;width:138.200px;height:18.400px;background:#f0f0f0;border-color:#d6d6d6"></div>
<div class="pv" style="left:860px;top:316.500px">0x70</div>
<!-- red plus -->
<svg class="a" style="left:0;top:0" width="1040" height="864" viewBox="0 0 1040 864">
<path d="M981 206.800 h8.600 M985.300 202.500 v8.600" stroke="#c11818" stroke-width="1.900"/>
<path d="M1019.300 153.200 l4 -4.200 l4 4.200 Z M1019.300 501.500 l4 4.200 l4 -4.200 Z" fill="#444"/>
<path d="M1019.300 283.500 h7 M1019.300 286.500 h7 M1019.300 289.500 h7" stroke="#555" stroke-width="1.100"/>
<!-- dock icons -->
<g fill="none" stroke="#111" stroke-width="1.300">
<rect x="1005.800" y="126.600" width="4.700" height="3.600"/><rect x="1003.700" y="129.200" width="4.700" height="3.700" fill="#e0e0e0"/>
<path d="M1019.600 126.300 l6.800 6.800 M1026.400 126.300 l-6.800 6.800" stroke-width="1.500"/>
</g>
</svg>
<!-- group Geometry -->
<div class="a" style="left:781px;top:354px;width:224px;height:170px;box-sizing:border-box;border:1px solid #d9d9d9;border-radius:3px;box-shadow:inset 1px 1px 0 #fbfbfb,1px 1px 0 #fbfbfb;clip-path:inset(0 -2px 12px 0)"></div>
<div class="pv" style="left:786px;top:346px;background:#f0f0f0;padding:0 3px">Geometry</div>
<div class="pl" style="left:779px;width:47px;top:372px">Length:</div>
<div class="ed" style="left:833.500px;top:369.500px;width:161px;height:18.600px"></div>
<div class="pv" style="left:837.500px;top:372.500px">120</div>
<div class="pl" style="left:779px;width:47px;top:396px">Angle:</div>
<div class="ed" style="left:833.500px;top:393.700px;width:161px;height:18.600px"></div>
<div class="pv" style="left:837.500px;top:396.500px">0</div>
<div class="pv" style="left:790px;top:417px;font-weight:bold;font-size:12px">Start Point</div>
<div class="pl" style="left:779px;width:47px;top:437px">X:</div>
<div class="ed" style="left:833.500px;top:434.400px;width:161px;height:18.600px"></div>
<div class="pv" style="left:837.500px;top:437.500px">0</div>
<div class="pl" style="left:779px;width:47px;top:461px">Y:</div>
<div class="ed" style="left:833.500px;top:458.600px;width:161px;height:18.600px"></div>
<div class="pv" style="left:837.500px;top:461.500px">36.82</div>
<div class="pv" style="left:790px;top:482px;font-weight:bold;font-size:11.300px">End Point</div>
<div class="a" style="left:771px;top:499px;width:244px;height:13px;overflow:hidden">
<div class="pl" style="left:8px;width:47px;top:3px">X:</div>
<div class="ed" style="left:62.500px;top:0.500px;width:161px;height:18.600px"></div>
<div class="pv" style="left:66.500px;top:3.500px">120</div>
</div>

<!-- LAYER LIST -->
<div class="a" style="left:770px;top:519px;width:262px;height:18px;box-sizing:border-box;border:1px solid #b4b4b4;background:linear-gradient(180deg,#dcdcdc 0,#e3e3e3 100%)"></div>
<div class="t" style="left:771.500px;top:521px;font-size:11.100px">Layer List</div>
<div class="btn" style="left:771.500px;top:540.400px;width:49.500px;height:19.600px"></div>
<div class="btn" style="left:823.600px;top:540.400px;width:49.800px;height:19.600px"></div>
<div class="btn" style="left:876.300px;top:540.400px;width:49.500px;height:19.600px"></div>
<div class="btn" style="left:928.600px;top:540.400px;width:49.800px;height:19.600px;background:#f4f4f4;border-color:#b4b4b4"></div>
<div class="btn" style="left:981.300px;top:540.400px;width:50px;height:19.600px"></div>
<div class="a" style="left:770.500px;top:561.500px;width:261.500px;height:193px;box-sizing:border-box;border:1px solid #828790;background:#fff"></div>
<div class="a" style="left:773px;top:564.400px;width:256.500px;height:16px;box-sizing:border-box;border:1px solid #dadada;border-radius:2px;background:linear-gradient(180deg,#f8f8f8,#e8e8e8)"></div>
<div class="ll" style="top:565.400px">0</div>
<div class="ll" style="top:583.600px">axes</div>
<div class="ll" style="top:601.800px">construction</div>
<div class="ll" style="top:619.900px">contour</div>
<div class="ll" style="top:637.900px">dim</div>
<div class="ll" style="top:655.800px">hatch</div>
<div class="ll" style="top:673.800px">hatch_border</div>
<svg class="a" style="left:0;top:0" width="1040" height="864" viewBox="0 0 1040 864">
<path d="M788.9 550.3 C791.0 543.3 801.0 543.1 803.6 549.8 C801.0 555.9 792.1 556.1 788.9 550.3 Z" fill="#0a0a0a"/>
<ellipse cx="796.5" cy="551.0" rx="3.9" ry="3.2" fill="#e4e4e4"/>
<circle cx="796.5" cy="550.6" r="2.3" fill="#0a0a0a"/>
<circle cx="795.8" cy="549.9" r="0.7" fill="#e4e4e4"/>
<path d="M841.1 550.3 C843.2 543.3 853.2 543.1 855.9 549.8 C853.2 555.9 844.3 556.1 841.1 550.3 Z" fill="#a6a6a6"/>
<ellipse cx="848.7" cy="551.0" rx="3.9" ry="3.2" fill="#e4e4e4"/>
<circle cx="848.7" cy="550.6" r="2.3" fill="#a6a6a6"/>
<circle cx="848.0" cy="549.9" r="0.7" fill="#e4e4e4"/>
<path d="M895.200 550.200 h11.600 M901 544.400 v11.600" stroke="#c4161c" stroke-width="2.600"/>
<path d="M948.500 550.200 h10" stroke="#a9a9a9" stroke-width="2.400"/>
<path d="M1010.800 543.600 L1013.100 545.500 L1002.700 556 L1000.400 554 Z" fill="#f0b13c" stroke="#b9801c" stroke-width=".5"/><path d="M1000.400 554 L1002.700 556 L998.800 557.200 Z" fill="#e8d2a8" stroke="#8a6a3a" stroke-width=".3"/><path d="M1010.800 543.600 L1013.100 545.500 L1012.100 546.500 L1009.800 544.600 Z" fill="#d9534a"/>
<path d="M775.7 572.2 C777.7 565.5 787.2 565.3 789.7 571.7 C787.2 577.5 778.7 577.7 775.7 572.2 Z" fill="#14325c"/>
<ellipse cx="782.9" cy="572.9" rx="3.7" ry="3.0" fill="#dce8f4"/>
<circle cx="782.9" cy="572.5" r="2.2" fill="#14325c"/>
<circle cx="782.2" cy="571.8" r="0.7" fill="#dce8f4"/>
<path d="M796.6 571.9 V569.9 A3.300 3.300 0 0 1 803.2 569.9 V571.9" fill="none" stroke="#b4c6dc" stroke-width="1.300"/>
<rect x="794.9" y="571.3" width="10" height="7.100" fill="#7ba3cf"/>
<path d="M775.7 590.4 C777.7 583.7 787.2 583.5 789.7 589.9 C787.2 595.7 778.7 595.9 775.7 590.4 Z" fill="#0a0a0a"/>
<ellipse cx="782.9" cy="591.1" rx="3.7" ry="3.0" fill="#fff"/>
<circle cx="782.9" cy="590.7" r="2.2" fill="#0a0a0a"/>
<circle cx="782.2" cy="590.0" r="0.7" fill="#fff"/>
<path d="M796.6 590.1 V588.1 A3.300 3.300 0 0 1 803.2 588.1 V590.1" fill="none" stroke="#c9c9c9" stroke-width="1.300"/>
<rect x="794.9" y="589.5" width="10" height="7.100" fill="#a0a0a0"/>
<path d="M775.7 608.6 C777.7 601.9 787.2 601.7 789.7 608.1 C787.2 613.9 778.7 614.1 775.7 608.6 Z" fill="#b9b9b9"/>
<ellipse cx="782.9" cy="609.3" rx="3.7" ry="3.0" fill="#fff"/>
<circle cx="782.9" cy="608.9" r="2.2" fill="#b9b9b9"/>
<circle cx="782.2" cy="608.2" r="0.7" fill="#fff"/>
<path d="M796.6 608.3 V606.3 A3.300 3.300 0 0 1 803.2 606.3 V608.3" fill="none" stroke="#c9c9c9" stroke-width="1.300"/>
<rect x="794.9" y="607.7" width="10" height="7.100" fill="#a0a0a0"/>
<path d="M775.7 626.7 C777.7 620.0 787.2 619.8 789.7 626.2 C787.2 632.0 778.7 632.2 775.7 626.7 Z" fill="#0a0a0a"/>
<ellipse cx="782.9" cy="627.4" rx="3.7" ry="3.0" fill="#fff"/>
<circle cx="782.9" cy="627.0" r="2.2" fill="#0a0a0a"/>
<circle cx="782.2" cy="626.3" r="0.7" fill="#fff"/>
<path d="M796.6 626.4 V624.4 A3.300 3.300 0 0 1 803.2 624.4 V626.4" fill="none" stroke="#c9c9c9" stroke-width="1.300"/>
<rect x="794.9" y="625.8" width="10" height="7.100" fill="#a0a0a0"/>
<path d="M775.7 644.7 C777.7 638.0 787.2 637.8 789.7 644.2 C787.2 650.0 778.7 650.2 775.7 644.7 Z" fill="#0a0a0a"/>
<ellipse cx="782.9" cy="645.4" rx="3.7" ry="3.0" fill="#fff"/>
<circle cx="782.9" cy="645.0" r="2.2" fill="#0a0a0a"/>
<circle cx="782.2" cy="644.3" r="0.7" fill="#fff"/>
<path d="M796.6 644.4 V642.4 A3.300 3.300 0 0 1 803.2 642.4 V644.4" fill="none" stroke="#c9c9c9" stroke-width="1.300"/>
<rect x="794.9" y="643.8" width="10" height="7.100" fill="#a0a0a0"/>
<path d="M775.7 662.7 C777.7 656.0 787.2 655.8 789.7 662.2 C787.2 668.0 778.7 668.2 775.7 662.7 Z" fill="#0a0a0a"/>
<ellipse cx="782.9" cy="663.4" rx="3.7" ry="3.0" fill="#fff"/>
<circle cx="782.9" cy="663.0" r="2.2" fill="#0a0a0a"/>
<circle cx="782.2" cy="662.3" r="0.7" fill="#fff"/>
<path d="M796.6 662.4 V660.4 A3.300 3.300 0 0 1 803.2 660.4 V662.4" fill="none" stroke="#c9c9c9" stroke-width="1.300"/>
<rect x="794.9" y="661.8" width="10" height="7.100" fill="#a0a0a0"/>
<path d="M775.7 680.7 C777.7 674.0 787.2 673.8 789.7 680.2 C787.2 686.0 778.7 686.2 775.7 680.7 Z" fill="#0a0a0a"/>
<ellipse cx="782.9" cy="681.4" rx="3.7" ry="3.0" fill="#fff"/>
<circle cx="782.9" cy="681.0" r="2.2" fill="#0a0a0a"/>
<circle cx="782.2" cy="680.3" r="0.7" fill="#fff"/>
<path d="M796.6 680.4 V678.4 A3.300 3.300 0 0 1 803.2 678.4 V680.4" fill="none" stroke="#c9c9c9" stroke-width="1.300"/>
<rect x="794.9" y="679.8" width="10" height="7.100" fill="#a0a0a0"/>
<g fill="none" stroke="#111" stroke-width="1.300"><rect x="1005.800" y="524.600" width="4.700" height="3.600"/><rect x="1003.700" y="527.200" width="4.700" height="3.700" fill="#e0e0e0"/><path d="M1019.600 524.300 l6.800 6.800 M1026.400 524.300 l-6.800 6.800" stroke-width="1.500"/></g>
</svg>

<!-- BOTTOM: command history, command line, status bar -->
<div class="a" style="left:8px;top:758px;width:1024px;height:38px;box-sizing:border-box;background:#fff;border:1px solid #a9a9a9;border-top-color:#dedede"></div>
<div class="a" style="left:9px;top:758px;width:1005px;height:37px;overflow:hidden;color:#16166e;font-size:10.700px">
<div class="t" style="left:4.700px;top:-6.500px"><i style="font-size:10.300px;color:#22228c">Command:</i> snapauto</div>
<div class="t" style="left:4.700px;top:6.500px"><i style="font-size:10.300px;color:#22228c">Command:</i> snapauto</div>
<div class="t" style="left:4.700px;top:19.500px"><i style="font-size:10.300px;color:#22228c">Command:</i> linemenu</div>
</div>
<!-- history scrollbar -->
<div class="a" style="left:1015px;top:758px;width:16px;height:37px;background:linear-gradient(90deg,#e3e3e3 0,#efefef 3px,#f3f3f3 9px,#efefef 100%)"></div>
<div class="a" style="left:1015px;top:776px;width:16px;height:1px;background:#d9d9d9"></div>
<!-- command line -->
<div class="a" style="left:8px;top:796px;width:1024px;height:23px;box-sizing:border-box;background:#fff;border:1px solid #8c8c8c;border-top-color:#c4c4c4;border-left-color:#bdbdbd"></div>
<div class="t" style="left:9.500px;top:801px;font-size:11px">Command:</div>
<!-- status bar -->
<div class="tbsep" style="left:161px;top:823px;height:31px;background:#b9b9b9"></div>
<div class="tbsep" style="left:316px;top:823px;height:31px;background:#b9b9b9"></div>
<div class="tbsep" style="left:578px;top:823px;height:31px;background:#b9b9b9"></div>
<div class="tbsep" style="left:776px;top:823px;height:31px;background:#b9b9b9"></div>
<div class="tbsep" style="left:909px;top:823px;height:31px;background:#b9b9b9"></div>
<div class="st" style="left:10.500px;top:824.200px">55.6638,36.4368</div>
<div class="st" style="left:11px;top:840.500px">-</div>
<div class="st" style="left:165px;top:824.200px">66.529&lt;33.2083</div>
<div class="st" style="left:165.500px;top:840.500px">-</div>
<div class="st" style="left:327px;width:100px;text-align:right;top:826.500px;font-size:8.750px">Select entity or region</div>
<div class="st" style="left:307px;width:120px;text-align:right;top:838.500px;font-size:8.750px">Move entity or reference</div>
<div class="st" style="left:583.500px;top:826.500px;font-size:8.750px">Selected entities:</div>
<div class="st" style="left:583.500px;top:838.500px;font-size:8.750px">1 Line on Layer "construction".</div>
<div class="t" style="left:953.500px;top:829.500px;font-size:19.700px;line-height:24px;color:#e3e3e3;">filepuma</div>
<svg class="a" style="left:0;top:0" width="1040" height="864" viewBox="0 0 1040 864">
<defs><linearGradient id="gMouse" x1="0" y1="0" x2="1" y2="1"><stop offset="0" stop-color="#ffffff"/><stop offset=".55" stop-color="#efefef"/><stop offset="1" stop-color="#bdbdbd"/></linearGradient></defs>
<path d="M1019.300 770.500 l4 -4.200 l4 4.200 Z M1019.300 784.500 l4 4.200 l4 -4.200 Z" fill="#444"/>
<!-- mouse -->
<g transform="rotate(-24 448.500 838)">
<path d="M448.500 823.200 C456 823.200 459.800 828 459.800 836 C459.800 847 455.500 853.600 448.500 853.600 C441.500 853.600 437.200 847 437.200 836 C437.200 828 441 823.200 448.500 823.200 Z" fill="url(#gMouse)" stroke="#b4b4b4" stroke-width=".9"/>
<path d="M439 834 C444 838 453 838 458 834" fill="none" stroke="#d6d6d6" stroke-width=".8"/>
<rect x="447.300" y="828" width="2.400" height="5.800" rx="1.200" fill="#4f6fd8"/>
<path d="M448.500 823.200 v-2" stroke="#8a8a8a" stroke-width="1"/>
</g>
<!-- size grip -->
<g fill="#b0b0b0"><rect x="1028" y="846" width="1.500" height="1.500"/><rect x="1025" y="849" width="1.500" height="1.500"/><rect x="1028" y="849" width="1.500" height="1.500"/><rect x="1022" y="852" width="1.500" height="1.500"/><rect x="1025" y="852" width="1.500" height="1.500"/><rect x="1028" y="852" width="1.500" height="1.500"/></g>
</svg>

</body>
</html>
